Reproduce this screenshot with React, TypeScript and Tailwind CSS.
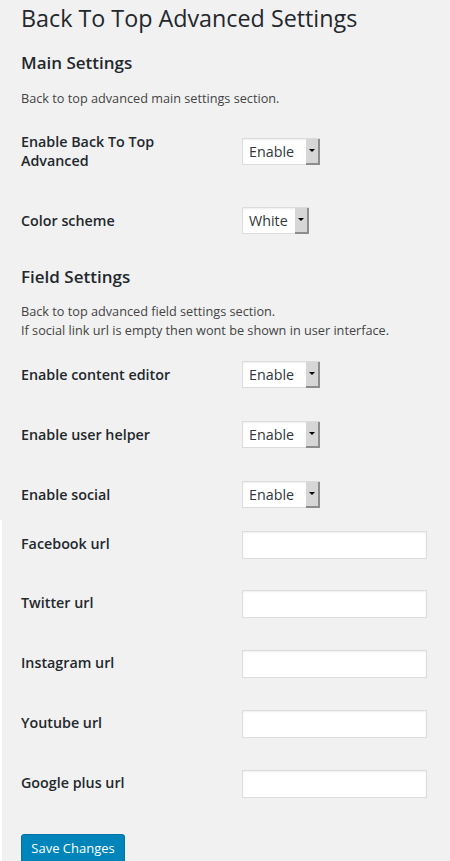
import type { ReactNode } from 'react';

function Select({ value, width }: { value: string; width: string }) {
    return (
        <div className="flex h-[27px] border border-[#dcdcdc] bg-white shadow-[inset_0_1px_2px_rgba(0,0,0,0.07)]">
            <span className={`${width} pl-[6px] text-[14.3px] leading-[25px] text-[#32373c]`}>{value}</span>
            <span className="flex w-[14px] items-center justify-center bg-[#d6d6d6] border-r-2 border-b-2 border-[#8d8d8d] -mr-px -mb-px">
                <span className="w-0 h-0 border-x-[3px] border-t-[3px] border-x-transparent border-t-black" />
            </span>
        </div>
    );
}

function TextInput() {
    return <input type="text" className="w-[185px] h-[28px] border border-[#dddddd] bg-white shadow-[inset_0_1px_2px_rgba(0,0,0,0.07)] outline-none" />;
}

function Row({ label, children, shift = false, height = 'h-[60px]' }: { label: string; children: ReactNode; shift?: boolean; height?: string }) {
    return (
        <div className={`flex items-center ${height}`}>
            <div className={`w-[221px] shrink-0 pr-[21px] text-[14.3px] font-semibold leading-[19px] text-[#23282d] ${shift ? 'pb-[4px]' : ''}`}>
                {label}
            </div>
            {children}
        </div>
    );
}

export default function App() {
    const socials = ['Twitter url', 'Instagram url', 'Youtube url', 'Google plus url'];

    return (
        <div className="min-h-screen flex flex-col bg-[#f1f1f1] font-['Open_Sans',sans-serif] text-[#23282d]">
            <div className="pl-[21px]">
                <h1 className="mt-[3px] h-[30px] text-[23.3px] font-normal leading-[30px]">Back To Top Advanced Settings</h1>

                <h2 className="mt-[18px] h-[24px] text-[17px] font-semibold leading-[24px]">Main Settings</h2>
                <p className="mt-[13px] h-[20px] text-[12.7px] leading-[20px] text-[#444]">Back to top advanced main settings section.</p>

                <div className="mt-[13px]">
                    <Row label="Enable Back To Top Advanced">
                        <Select value="Enable" width="w-[63px]" />
                    </Row>
                </div>
                <div className="mt-[9px]">
                    <Row label="Color scheme">
                        <Select value="White" width="w-[52px]" />
                    </Row>
                </div>

                <h2 className="mt-[15px] h-[24px] text-[17px] font-semibold leading-[24px]">Field Settings</h2>
                <p className="mt-[13px] text-[12.7px] leading-[19px] text-[#444]">
                    Back to top advanced field settings section.
                    <br />
                    If social link url is empty then wont be shown in user interface.
                </p>

                <div className="mt-[4px]">
                    <Row label="Enable content editor">
                        <Select value="Enable" width="w-[63px]" />
                    </Row>
                    <Row label="Enable user helper">
                        <Select value="Enable" width="w-[63px]" />
                    </Row>
                    <Row label="Enable social">
                        <Select value="Enable" width="w-[63px]" />
                    </Row>
                </div>
            </div>

            {/* lower block sits against a thin white edge on the left */}
            <div className="flex-1 -mt-[4px] pt-[4px] pl-[19px] border-l-2 border-white pb-[20px]">
                <Row label="Facebook url" shift height="h-[42px]">
                    <TextInput />
                </Row>
                <div className="mt-[8px]">
                    {socials.map((s) => (
                        <Row key={s} label={s} shift>
                            <TextInput />
                        </Row>
                    ))}
                </div>

                <button className="mt-[20px] h-[28px] w-[104px] rounded-[3px] border border-[#0073aa] bg-[#0085ba] text-[13px] leading-[26px] text-white shadow-[0_1px_0_#006799]">
                    Save Changes
                </button>
            </div>
        </div>
    );
}
